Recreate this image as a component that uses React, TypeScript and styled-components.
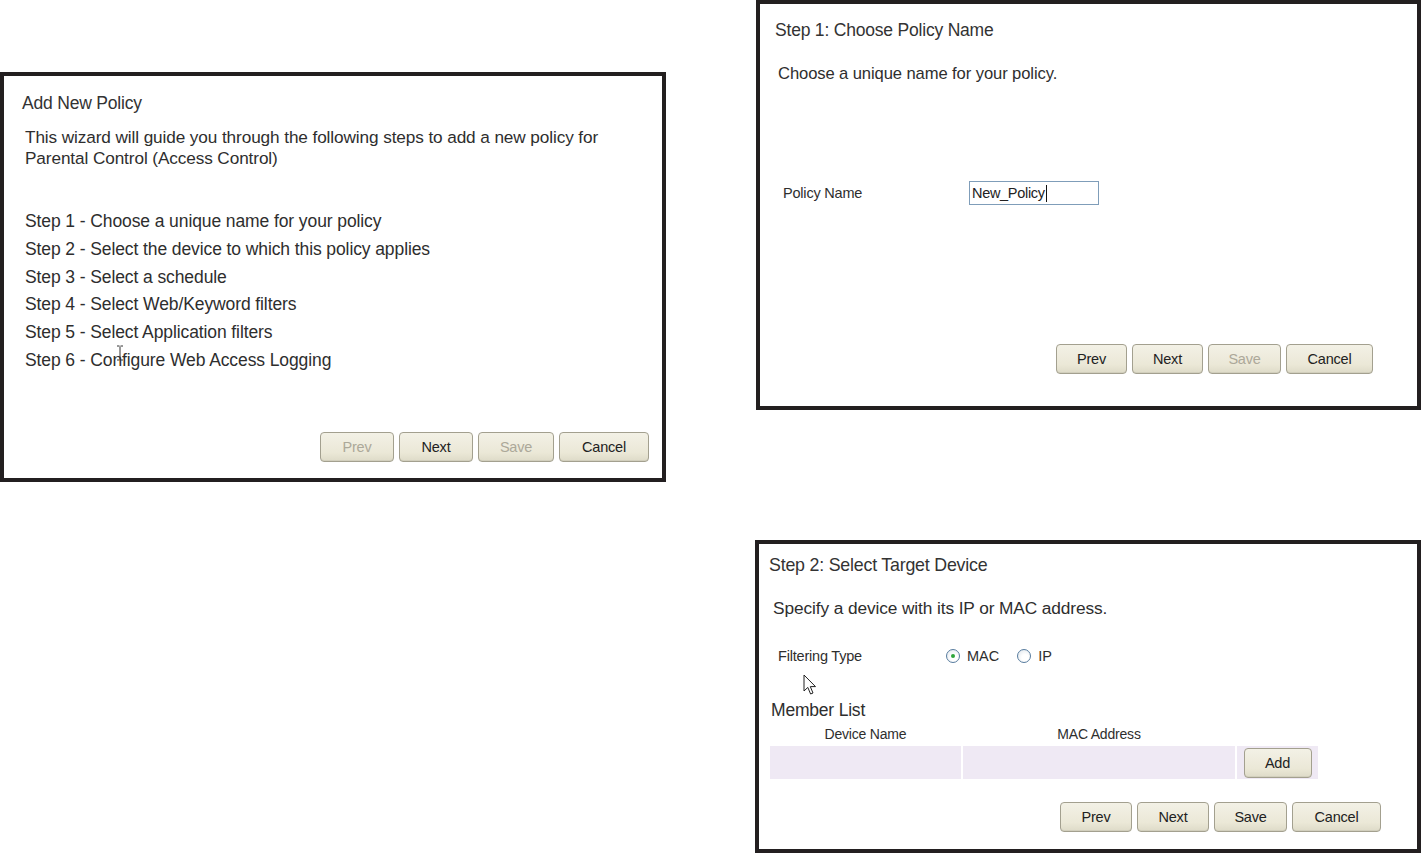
import React from 'react';
import styled, { createGlobalStyle } from 'styled-components';

const GlobalStyle = createGlobalStyle`
  html, body {
    margin: 0;
    padding: 0;
    background: #ffffff;
  }
  body {
    font-family: "Liberation Sans", Arial, sans-serif;
    color: #2b2b2b;
  }
`;

const Page = styled.div`
  display: grid;
  grid-template-columns: 666px 665px;
  column-gap: 90px;
  width: 1421px;
  height: 855px;
  overflow: hidden;
`;

const LeftColumn = styled.div`
  padding-top: 72px;
`;

const RightColumn = styled.div`
  display: flex;
  flex-direction: column;
  gap: 130px;
`;

const Panel = styled.div<{ $height: number; $shift?: number }>`
  position: relative;
  box-sizing: border-box;
  height: ${({ $height }) => $height}px;
  margin-left: ${({ $shift }) => $shift ?? 0}px;
  border: 4px solid #231f20;
  background: #fff;
  display: flex;
  flex-direction: column;
`;

const Title = styled.div<{ $top: number; $left: number; $size?: number }>`
  margin-top: ${({ $top }) => $top}px;
  margin-left: ${({ $left }) => $left}px;
  font-size: ${({ $size }) => $size ?? 17}px;
  line-height: 20px;
  letter-spacing: -0.2px;
  color: #333;
`;

const Para = styled.div<{ $top: number; $left: number; $size?: number }>`
  margin-top: ${({ $top }) => $top}px;
  margin-left: ${({ $left }) => $left}px;
  font-size: ${({ $size }) => $size ?? 17.5}px;
  line-height: 21px;
  letter-spacing: -0.1px;
  color: #2e2e2e;
`;

const StepList = styled.ul`
  list-style: none;
  margin: 39px 0 0 21px;
  padding: 0;
`;

const StepItem = styled.li`
  font-size: 17.5px;
  line-height: 27.8px;
  letter-spacing: -0.1px;
  color: #2e2e2e;
`;

const Spacer = styled.div`
  flex: 1;
`;

const ButtonRow = styled.div<{ $right: number; $bottom: number; $gap: number }>`
  display: flex;
  justify-content: flex-end;
  gap: ${({ $gap }) => $gap}px;
  margin-right: ${({ $right }) => $right}px;
  margin-bottom: ${({ $bottom }) => $bottom}px;
`;

const WizButton = styled.button<{ $w: number; $h?: number }>`
  box-sizing: border-box;
  width: ${({ $w }) => $w}px;
  height: ${({ $h }) => $h ?? 30}px;
  padding: 0;
  border: 1px solid #a3a08f;
  border-radius: 4px;
  background: linear-gradient(#f3f1e6, #ebe8d7 70%, #dedbc8);
  box-shadow: inset 0 -1px 0 #d2cfbd;
  font-family: "Liberation Sans", Arial, sans-serif;
  font-size: 14.5px;
  letter-spacing: -0.2px;
  color: #222;
  cursor: pointer;
  &:disabled {
    color: #aca899;
    cursor: default;
  }
`;

const FieldRow = styled.div<{ $top: number; $left: number }>`
  display: flex;
  align-items: center;
  margin-top: ${({ $top }) => $top}px;
  margin-left: ${({ $left }) => $left}px;
`;

const FieldLabel = styled.div<{ $w: number }>`
  width: ${({ $w }) => $w}px;
  font-size: 14.5px;
  letter-spacing: -0.2px;
  color: #2e2e2e;
`;

const TextInput = styled.div`
  box-sizing: border-box;
  width: 130px;
  height: 24px;
  border: 1px solid #7f9db9;
  padding: 3px 2px;
  font-size: 14.5px;
  letter-spacing: -0.3px;
  line-height: 16px;
  color: #222;
  display: flex;
  align-items: center;
`;

const Caret = styled.span`
  display: inline-block;
  width: 1px;
  height: 17px;
  background: #111;
  margin-left: 1px;
`;

const RadioGroup = styled.div`
  display: flex;
  align-items: center;
  gap: 18px;
`;

const RadioLabel = styled.label`
  display: flex;
  align-items: center;
  gap: 7px;
  font-size: 14.5px;
  color: #2e2e2e;
`;

const RadioDot = styled.span<{ $on?: boolean }>`
  box-sizing: border-box;
  width: 14px;
  height: 14px;
  border-radius: 50%;
  border: 1px solid #587c9e;
  background: radial-gradient(circle at 60% 65%, #ffffff 30%, #dde4ea 100%);
  display: flex;
  align-items: center;
  justify-content: center;
  &::after {
    content: '';
    width: 4px;
    height: 4px;
    border-radius: 50%;
    background: ${({ $on }) => ($on ? '#2ea53a' : 'transparent')};
  }
`;

const SectionHead = styled.div`
  margin: 36px 0 0 12px;
  font-size: 17.5px;
  line-height: 20px;
  letter-spacing: -0.2px;
  color: #2e2e2e;
`;

const MemberTable = styled.div`
  margin: 4px 0 0 11px;
  width: 548px;
  display: grid;
  grid-template-columns: 191px 272px 81px;
  column-gap: 2px;
`;

const HeadCell = styled.div`
  text-align: center;
  font-size: 14px;
  line-height: 20px;
  letter-spacing: -0.2px;
  color: #2e2e2e;
  padding-bottom: 2px;
`;

const BodyCell = styled.div`
  height: 33px;
  background: #efe9f4;
  display: flex;
  align-items: center;
  justify-content: center;
`;

const Cursor = styled.svg<{ $x: number; $y: number }>`
  position: absolute;
  left: ${({ $x }) => $x}px;
  top: ${({ $y }) => $y}px;
  pointer-events: none;
`;

const steps = [
  'Step 1 - Choose a unique name for your policy',
  'Step 2 - Select the device to which this policy applies',
  'Step 3 - Select a schedule',
  'Step 4 - Select Web/Keyword filters',
  'Step 5 - Select Application filters',
  'Step 6 - Configure Web Access Logging',
];

export default function App() {
  return (
    <>
      <GlobalStyle />
      <Page>
        <LeftColumn>
          <Panel $height={410}>
            <Title $top={17} $left={18} $size={17.5}>Add New Policy</Title>
            <Para $top={14} $left={21} $size={17.2}>
              This wizard will guide you through the following steps to add a new policy for
              <br />
              Parental Control (Access Control)
            </Para>
            <StepList>
              {steps.map((s) => (
                <StepItem key={s}>{s}</StepItem>
              ))}
            </StepList>
            <Spacer />
            <ButtonRow $right={13} $bottom={16} $gap={5}>
              <WizButton $w={74} disabled>Prev</WizButton>
              <WizButton $w={74}>Next</WizButton>
              <WizButton $w={76} disabled>Save</WizButton>
              <WizButton $w={90}>Cancel</WizButton>
            </ButtonRow>
            <Cursor $x={112} $y={269} width="8" height="16" viewBox="0 0 8 16">
              <path d="M1 1h2.5M4.5 1H7M4 1.5v13M1 15h2.5M4.5 15H7" stroke="#333" strokeWidth="1" fill="none" />
            </Cursor>
          </Panel>
        </LeftColumn>

        <RightColumn>
          <Panel $height={410}>
            <Title $top={16} $left={15} $size={17.5}>Step 1: Choose Policy Name</Title>
            <Para $top={23} $left={18} $size={16.6}>Choose a unique name for your policy.</Para>
            <FieldRow $top={97} $left={23}>
              <FieldLabel $w={186}>Policy Name</FieldLabel>
              <TextInput>
                New_Policy
                <Caret />
              </TextInput>
            </FieldRow>
            <Spacer />
            <ButtonRow $right={44} $bottom={32} $gap={5}>
              <WizButton $w={71}>Prev</WizButton>
              <WizButton $w={71}>Next</WizButton>
              <WizButton $w={73} disabled>Save</WizButton>
              <WizButton $w={87}>Cancel</WizButton>
            </ButtonRow>
          </Panel>

          <Panel $height={313} $shift={-1}>
            <Title $top={11} $left={10} $size={17.8}>Step 2: Select Target Device</Title>
            <Para $top={23} $left={14} $size={17.3}>Specify a device with its IP or MAC address.</Para>
            <FieldRow $top={29} $left={19}>
              <FieldLabel $w={168}>Filtering Type</FieldLabel>
              <RadioGroup>
                <RadioLabel>
                  <RadioDot $on />
                  MAC
                </RadioLabel>
                <RadioLabel>
                  <RadioDot />
                  IP
                </RadioLabel>
              </RadioGroup>
            </FieldRow>
            <SectionHead>Member List</SectionHead>
            <MemberTable>
              <HeadCell>Device Name</HeadCell>
              <HeadCell>MAC Address</HeadCell>
              <HeadCell />
              <BodyCell />
              <BodyCell />
              <BodyCell>
                <WizButton $w={68} $h={30}>Add</WizButton>
              </BodyCell>
            </MemberTable>
            <Spacer />
            <ButtonRow $right={36} $bottom={17} $gap={5}>
              <WizButton $w={72}>Prev</WizButton>
              <WizButton $w={72}>Next</WizButton>
              <WizButton $w={73}>Save</WizButton>
              <WizButton $w={89}>Cancel</WizButton>
            </ButtonRow>
            <Cursor $x={44} $y={130} width="14" height="22" viewBox="0 0 14 22">
              <path
                d="M1 1 L1 17 L4.8 13.4 L7.6 20 L10 19 L7.3 12.6 L12.5 12.6 Z"
                fill="#fff"
                stroke="#222"
                strokeWidth="1"
                strokeLinejoin="round"
              />
            </Cursor>
          </Panel>
        </RightColumn>
      </Page>
    </>
  );
}
